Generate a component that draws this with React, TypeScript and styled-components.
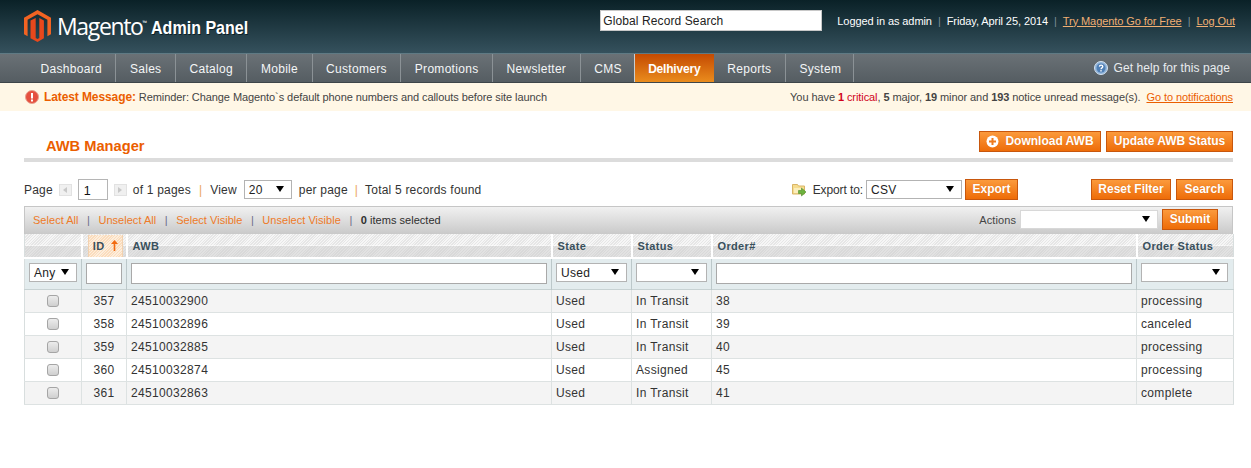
import React from "react";
import styled, { createGlobalStyle } from "styled-components";

const Global = createGlobalStyle`
  html, body {
    margin: 0;
    padding: 0;
    background: #fff;
    font-family: "Liberation Sans", Arial, sans-serif;
    font-size: 12px;
    color: #2f2f2f;
  }
  * { box-sizing: border-box; }
`;

const Header = styled.header`
  height: 54px;
  display: flex;
  justify-content: space-between;
  padding: 10px 16px 0 24px;
  background: linear-gradient(#0a2127, #35515d);
  border-bottom: 1px solid #5f7a84;
`;

const Brand = styled.div`
  display: flex;
  align-items: flex-start;
  color: #fff;
`;

const BrandName = styled.span`
  font-family: "Open Sans", sans-serif;
  font-size: 23px;
  line-height: 32px;
  letter-spacing: -1.35px;
  margin-left: 6px;
  sup {
    font-size: 6px;
    letter-spacing: 0;
    vertical-align: 10px;
    line-height: 0;
  }
`;

const BrandSub = styled.span`
  display: inline-block;
  font-weight: bold;
  font-size: 19px;
  line-height: 35px;
  margin-left: 4px;
  transform: scaleX(0.845);
  transform-origin: left center;
  text-shadow: 1px 1px 0 #0c2026;
`;

const HeaderRight = styled.div`
  display: flex;
  align-items: flex-start;
`;

const GlobalSearch = styled.input`
  width: 222px;
  height: 21px;
  border: 1px solid #c8c8c8;
  padding: 0 2px;
  font: 12px "Liberation Sans", sans-serif;
  letter-spacing: 0.1px;
  color: #222;
  background: #fff;
  outline: none;
`;

const UserInfo = styled.div`
  display: flex;
  align-items: center;
  height: 21px;
  margin-left: 15px;
  font-size: 11px;
  color: #fff;
  letter-spacing: -0.08px;
`;

const HeadLink = styled.a`
  color: #f1af73;
  text-decoration: underline;
`;

const Pipe = styled.span<{ $tone?: string; $gap?: number }>`
  color: ${(p) => p.$tone || "#7d8f96"};
  margin: 0 ${(p) => p.$gap ?? 6}px;
`;

const Nav = styled.nav`
  height: 29px;
  display: flex;
  justify-content: space-between;
  padding-left: 27px;
  background: linear-gradient(#6a7176, #555d62);
  border-bottom: 1px solid #3d4549;
`;

const NavList = styled.div`
  display: flex;
`;

const NavItem = styled.a<{ $active?: boolean }>`
  display: flex;
  align-items: center;
  height: 28px;
  padding: 2px 13.5px 0;
  font-size: 12px;
  letter-spacing: 0.3px;
  color: #f4f6f7;
  border-right: 1px solid #8b9296;
  &:nth-child(8) {
    padding-right: 12px;
  }
  &:last-child {
    padding-right: 12px;
  }
  ${(p) =>
    p.$active &&
    `
    width: 79px;
    justify-content: center;
    padding: 2px 0 0;
    font-weight: bold;
    letter-spacing: -0.2px;
    border-right: none;
    color: #fff;
    background: linear-gradient(#c44a02, #ea8c1d);
    box-shadow: -1px 0 0 #c9cdcf;
  `}
`;

const HelpLink = styled.a`
  display: flex;
  align-items: center;
  gap: 6px;
  height: 27px;
  padding: 0 21px 0 0;
  color: #e8ecef;
  letter-spacing: 0.08px;
`;

const Notice = styled.div`
  height: 28px;
  display: flex;
  align-items: center;
  justify-content: space-between;
  padding: 0 18px 0 25px;
  background: #fff7e6;
  font-size: 11px;
  color: #444;
`;

const NoticeLeft = styled.div`
  display: flex;
  align-items: center;
  gap: 5px;
  letter-spacing: -0.08px;
`;

const NoticeRight = styled.span`
  letter-spacing: -0.08px;
`;

const Latest = styled.strong`
  font-size: 12px;
  letter-spacing: -0.1px;
  color: #eb5e00;
`;

const Critical = styled.span`
  color: #d0021b;
`;

const NoticeLink = styled.a`
  color: #eb5e00;
  text-decoration: underline;
  margin-left: 3px;
`;

const Content = styled.main`
  padding: 20px 18px 0 24px;
`;

const TitleRow = styled.div`
  display: flex;
  justify-content: space-between;
  align-items: flex-start;
  padding-left: 22px;
  height: 31px;
  border-bottom: 4px solid #dcdcdc;
`;

const Title = styled.h3`
  margin: 7px 0 0;
  font-size: 14.67px;
  line-height: 16px;
  color: #eb5e00;
`;

const Buttons = styled.div`
  display: flex;
  gap: 5px;
`;

const Button = styled.button<{ $wide?: number }>`
  display: inline-flex;
  align-items: center;
  justify-content: center;
  gap: 6px;
  height: 21px;
  width: ${(p) => p.$wide}px;
  padding: 0 0 1px;
  border: 1px solid #c8570d;
  background: linear-gradient(#fb9a3c, #ee6c08);
  color: #fff;
  font: bold 12px "Liberation Sans", sans-serif;
  text-shadow: 0 0 1px #d9650f;
`;

const PagerRow = styled.div`
  display: flex;
  justify-content: space-between;
  align-items: center;
  margin-top: 17px;
  height: 21px;
`;

const Pager = styled.div`
  display: flex;
  align-items: center;
  color: #333;
  letter-spacing: 0.2px;
`;

const PageArrow = styled.span<{ $flip?: boolean }>`
  width: 13px;
  height: 12px;
  margin: 0 6px;
  display: flex;
  align-items: center;
  justify-content: center;
  background: #f0f0f0;
  border: 1px solid #e2e2e2;
  &::after {
    content: "";
    border-style: solid;
    border-width: 3px 4px;
    border-color: transparent;
    ${(p) =>
      p.$flip
        ? "border-left-color: #c8c8c8; margin-left: 4px;"
        : "border-right-color: #c8c8c8; margin-right: 4px;"}
  }
`;

const PageInput = styled.input`
  width: 30px;
  height: 21px;
  border: 1px solid #b5b5b5;
  padding: 2px 0 0 5px;
  font: 12.5px "Liberation Sans", sans-serif;
  color: #111;
  background: #fff;
  outline: none;
`;

const Select = styled.div<{ $w: number; $edge?: string }>`
  position: relative;
  width: ${(p) => p.$w}px;
  height: 19px;
  border: 1px solid ${(p) => p.$edge || "#b3b3b3"};
  background: #fff;
  display: flex;
  align-items: center;
  padding: 1px 0 0 4px;
  font-size: 12px;
  letter-spacing: 0.3px;
  color: #222;
  &::after {
    content: "";
    position: absolute;
    right: 7px;
    top: 50%;
    margin-top: -4px;
    border-style: solid;
    border-width: 6px 4px 0;
    border-color: #000 transparent transparent;
  }
`;

const ViewSelect = styled(Select)`
  margin: 0 7px;
`;

const ExportSelect = styled(Select)`
  margin: 0 3px 0 3px;
`;

const ExportBox = styled.div`
  display: flex;
  align-items: center;
  margin-right: 73px;
  margin-left: auto;
  color: #333;
  letter-spacing: -0.1px;
  svg {
    margin-right: 6px;
  }
`;

const MassBar = styled.div`
  height: 28px;
  display: flex;
  align-items: center;
  justify-content: space-between;
  margin-top: 6px;
  padding: 0 14px 2px 8px;
  border: 1px solid #c6c6c6;
  border-width: 1px 1px 0;
  background: linear-gradient(#f1f1f1, #c9c9c9);
  font-size: 11px;
`;

const MassLinks = styled.div`
  display: flex;
  align-items: center;
  letter-spacing: 0.03px;
`;

const MassLink = styled.a`
  color: #ee7a28;
`;

const Selected = styled.span`
  color: #2f2f2f;
  b { font-weight: bold; }
`;

const Actions = styled.div`
  display: flex;
  align-items: center;
  gap: 4px;
  color: #444;
  letter-spacing: 0.1px;
`;

const Grid = styled.table`
  width: 1209px;
  border-collapse: collapse;
  table-layout: fixed;
  border: 1px solid #d8dede;
  border-top: 0;
`;

const HeadCell = styled.th`
  height: 24px;
  padding: 0 0 0 5px;
  text-align: left;
  font-size: 11px;
  letter-spacing: 0.35px;
  font-weight: bold;
  color: #39505c;
  border-right: 2px solid #fff;
  border-bottom: 2px solid #fff;
  background: repeating-linear-gradient(135deg, #e6e6e6 0 1px, #f6f6f6 1px 2px) top / 100% 50% no-repeat,
    repeating-linear-gradient(135deg, #d9d9d9 0 1px, #e2e2e2 1px 2px) bottom / 100% 50% no-repeat;
  &:last-child { border-right: 0; }
`;

const SortTag = styled.span`
  display: flex;
  align-items: center;
  justify-content: flex-end;
  gap: 6px;
  height: 22px;
  width: 35px;
  padding-right: 4px;
  border: 1px solid #f1d1b0;
  border-width: 0 1px;
  background: repeating-linear-gradient(135deg, #fbdcbc 0 1px, #fdeedd 1px 2px);
  color: #39505c;
`;

const FilterRow = styled.tr`
  background: #d5e3e5;
  background-image: radial-gradient(#e3ecee 1px, transparent 1px);
  background-size: 2px 2px;
  border-bottom: 1px solid #c7d2d3;
`;

const FilterCell = styled.td`
  height: 31px;
  padding: 4px 4px 0;
  vertical-align: top;
  border-right: 1px solid #bcc8ca;
  &:last-child { border-right: 0; }
`;

const FilterInput = styled.input`
  display: block;
  width: 100%;
  height: 21px;
  border: 1px solid #a9a9a9;
  background: #fff;
  outline: none;
`;

const Row = styled.tr<{ $odd: boolean }>`
  background: ${(p) => (p.$odd ? "#f4f4f4" : "#fff")};
`;

const Cell = styled.td<{ $align?: string }>`
  height: 23px;
  padding: 0 4px;
  font-size: 12px;
  letter-spacing: 0.34px;
  color: #333;
  text-align: ${(p) => p.$align || "left"};
  border-right: 1px solid #dde2e2;
  border-bottom: 1px solid #dde2e2;
  &:last-child { border-right: 0; }
`;

const Check = styled.input`
  appearance: none;
  display: block;
  width: 12px;
  height: 12px;
  margin: 0 auto;
  border: 1px solid #a5a5a5;
  border-radius: 3px;
  background: linear-gradient(#ececec, #cfcfcf);
`;

const MagentoLogo = () => (
  <svg width="27" height="32" viewBox="0 0 27 32">
    <path fill="#f26322" d="M13.5 0 27 7.8v16.4l-3.6 2.1V9.8l-9.9-5.6-9.9 5.6v16.5L0 24.2V7.8z" />
    <path fill="#e8481c" d="M11.7 7.9v20.2l1.8 1 1.8-1V7.9l4.6 2.7v17.6L13.5 32l-7-3.8V10.6z" />
  </svg>
);

const HelpIcon = () => (
  <svg width="14" height="14" viewBox="0 0 14 14">
    <circle cx="7" cy="7" r="6.5" fill="#8fb3d9" stroke="#d5e3f1" />
    <circle cx="7" cy="7" r="4.5" fill="#4f7fb5" />
    <path d="M5.4 5.6C5.5 3.7 8.8 3.8 8.8 5.6 8.8 6.9 7 6.8 7 8.2" fill="none" stroke="#fff" strokeWidth="1.3" />
    <rect x="6.3" y="9.1" width="1.4" height="1.4" fill="#fff" />
  </svg>
);

const AlertIcon = () => (
  <svg width="14" height="14" viewBox="0 0 14 14">
    <circle cx="7" cy="7" r="6.5" fill="#e5503f" stroke="#e8a08f" />
    <rect x="6" y="3" width="2" height="5.5" fill="#fff" />
    <rect x="6" y="9.5" width="2" height="2" fill="#fff" />
  </svg>
);

const PlusIcon = () => (
  <svg width="13" height="13" viewBox="0 0 13 13">
    <circle cx="6.5" cy="6.5" r="6" fill="#fff" />
    <path d="M6.5 3v7M3 6.5h7" stroke="#ee7a1c" strokeWidth="2" />
  </svg>
);

const ExportIcon = () => (
  <svg width="15" height="15" viewBox="0 0 15 15">
    <path d="M.5 2.5h5l1 1.5h6v8H.5z" fill="#f6dc8e" stroke="#d9b566" />
    <path d="M2 6h9v5H2z" fill="#fbeebc" />
    <path d="M6.5 8.5h3V6l4.5 4-4.5 4v-2.5h-3z" fill="#6db33f" stroke="#4d8a2a" strokeWidth=".6" />
  </svg>
);

const SortArrow = () => (
  <svg width="7" height="11" viewBox="0 0 7 11">
    <path d="M3.5 0 7 4H4.3v7H2.7V4H0z" fill="#f26a0f" />
  </svg>
);

const rows = [
  { id: 357, awb: "24510032900", status: "In Transit", order: 38, orderStatus: "processing" },
  { id: 358, awb: "24510032896", status: "In Transit", order: 39, orderStatus: "canceled" },
  { id: 359, awb: "24510032885", status: "In Transit", order: 40, orderStatus: "processing" },
  { id: 360, awb: "24510032874", status: "Assigned", order: 45, orderStatus: "processing" },
  { id: 361, awb: "24510032863", status: "In Transit", order: 41, orderStatus: "complete" },
];

const menu = ["Dashboard", "Sales", "Catalog", "Mobile", "Customers", "Promotions", "Newsletter", "CMS"];

export default function App() {
  return (
    <>
      <Global />
      <Header>
        <Brand>
          <MagentoLogo />
          <BrandName>
            Magento<sup>™</sup>
          </BrandName>
          <BrandSub>Admin Panel</BrandSub>
        </Brand>
        <HeaderRight>
          <GlobalSearch defaultValue="Global Record Search" />
          <UserInfo>
            Logged in as admin
            <Pipe>|</Pipe>
            Friday, April 25, 2014
            <Pipe>|</Pipe>
            <HeadLink>Try Magento Go for Free</HeadLink>
            <Pipe>|</Pipe>
            <HeadLink>Log Out</HeadLink>
          </UserInfo>
        </HeaderRight>
      </Header>
      <Nav>
        <NavList>
          {menu.map((m) => (
            <NavItem key={m}>{m}</NavItem>
          ))}
          <NavItem $active>Delhivery</NavItem>
          <NavItem>Reports</NavItem>
          <NavItem>System</NavItem>
        </NavList>
        <HelpLink>
          <HelpIcon />
          Get help for this page
        </HelpLink>
      </Nav>
      <Notice>
        <NoticeLeft>
          <AlertIcon />
          <span>
            <Latest>Latest Message:</Latest> Reminder: Change Magento`s default phone numbers and callouts before site
            launch
          </span>
        </NoticeLeft>
        <NoticeRight>
          You have <b><Critical>1</Critical></b> <Critical>critical</Critical>, <b>5</b> major, <b>19</b> minor and{" "}
          <b>193</b> notice unread message(s). <NoticeLink>Go to notifications</NoticeLink>
        </NoticeRight>
      </Notice>
      <Content>
        <TitleRow>
          <Title>AWB Manager</Title>
          <Buttons>
            <Button $wide={122}>
              <PlusIcon /> Download AWB
            </Button>
            <Button $wide={127}>Update AWB Status</Button>
          </Buttons>
        </TitleRow>
        <PagerRow>
          <Pager>
            Page
            <PageArrow />
            <PageInput defaultValue="1" />
            <PageArrow $flip />
            of 1 pages
            <Pipe $tone="#eba75e" $gap={8}>|</Pipe>
            View
            <ViewSelect $w={48}>20</ViewSelect>
            per page
            <Pipe $tone="#eba75e" $gap={7}>|</Pipe>
            Total 5 records found
          </Pager>
          <ExportBox>
            <ExportIcon />
            Export to:
            <ExportSelect $w={96}>CSV</ExportSelect>
            <Button $wide={53}>Export</Button>
          </ExportBox>
          <Buttons>
            <Button $wide={80}>Reset Filter</Button>
            <Button $wide={57}>Search</Button>
          </Buttons>
        </PagerRow>
        <MassBar>
          <MassLinks>
            <MassLink>Select All</MassLink>
            <Pipe $tone="#6b6b8a" $gap={8.5}>|</Pipe>
            <MassLink>Unselect All</MassLink>
            <Pipe $tone="#6b6b8a" $gap={8.5}>|</Pipe>
            <MassLink>Select Visible</MassLink>
            <Pipe $tone="#6b6b8a" $gap={8.5}>|</Pipe>
            <MassLink>Unselect Visible</MassLink>
            <Pipe $tone="#6b6b8a" $gap={8.5}>|</Pipe>
            <Selected><b>0</b> items selected</Selected>
          </MassLinks>
          <Actions>
            Actions
            <Select $w={138} $edge="#d8d8d8" />
            <Button $wide={56}>Submit</Button>
          </Actions>
        </MassBar>
        <Grid>
          <colgroup>
            <col width={57} />
            <col width={45} />
            <col width={425} />
            <col width={80} />
            <col width={80} />
            <col width={425} />
            <col width={97} />
          </colgroup>
          <thead>
            <tr>
              <HeadCell />
              <HeadCell>
                <SortTag>ID <SortArrow /></SortTag>
              </HeadCell>
              <HeadCell>AWB</HeadCell>
              <HeadCell>State</HeadCell>
              <HeadCell>Status</HeadCell>
              <HeadCell>Order#</HeadCell>
              <HeadCell>Order Status</HeadCell>
            </tr>
            <FilterRow>
              <FilterCell><Select $w={48}>Any</Select></FilterCell>
              <FilterCell><FilterInput /></FilterCell>
              <FilterCell><FilterInput /></FilterCell>
              <FilterCell><Select $w={71}>Used</Select></FilterCell>
              <FilterCell><Select $w={71} /></FilterCell>
              <FilterCell><FilterInput /></FilterCell>
              <FilterCell><Select $w={87} /></FilterCell>
            </FilterRow>
          </thead>
          <tbody>
            {rows.map((r, i) => (
              <Row key={r.id} $odd={i % 2 === 0}>
                <Cell><Check type="checkbox" /></Cell>
                <Cell $align="right">{r.id}&nbsp;&nbsp;</Cell>
                <Cell>{r.awb}</Cell>
                <Cell>Used</Cell>
                <Cell>{r.status}</Cell>
                <Cell>{r.order}</Cell>
                <Cell>{r.orderStatus}</Cell>
              </Row>
            ))}
          </tbody>
        </Grid>
      </Content>
    </>
  );
}
